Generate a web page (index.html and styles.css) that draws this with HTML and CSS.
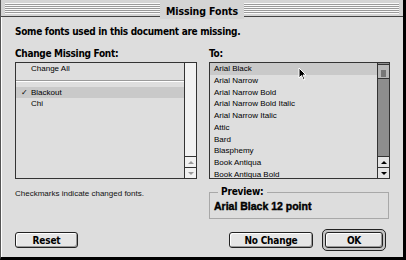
FILE: index.html
```html
<!DOCTYPE html>
<html lang="en">
<head>
  <meta charset="UTF-8">
  <title>Missing Fonts</title>
  <link rel="stylesheet" href="styles.css">
</head>
<body>

  <div class="window">
    <div class="titlebar">
      <span class="title">Missing Fonts</span>
    </div>

    <div class="content">
      <p class="message">Some fonts used in this document are missing.</p>

      <div class="columns">
        <div class="label">Change Missing Font:</div>
        <div class="label">To:</div>

        <div class="listbox">
          <ul class="list missing">
            <li>Change All</li>
            <li class="sep"></li>
            <li class="sel"><span class="check">&#x2713;</span>Blackout</li>
            <li>Chi</li>
          </ul>
          <div class="scrollbar off">
            <div class="track"></div>
            <div class="arrow up"><span></span></div>
            <div class="arrow down"><span></span></div>
          </div>
        </div>

        <div class="listbox">
          <ul class="list fonts">
            <li class="sel">Arial Black</li>
            <li>Arial Narrow</li>
            <li>Arial Narrow Bold</li>
            <li>Arial Narrow Bold Italic</li>
            <li>Arial Narrow Italic</li>
            <li>Attic</li>
            <li>Bard</li>
            <li>Blasphemy</li>
            <li>Book Antiqua</li>
            <li>Book Antiqua Bold</li>
          </ul>
          <div class="scrollbar">
            <div class="track"><div class="thumb"></div></div>
            <div class="arrow up"><span></span></div>
            <div class="arrow down"><span></span></div>
          </div>
        </div>

        <p class="note">Checkmarks indicate changed fonts.</p>

        <fieldset class="preview">
          <legend>Preview:</legend>
          <div class="sample">Arial Black 12 point</div>
        </fieldset>

        <div class="left-buttons">
          <button class="btn">Reset</button>
        </div>

        <div class="right-buttons">
          <button class="btn nochange">No Change</button>
          <div class="default-ring"><button class="btn ok">OK</button></div>
        </div>
      </div>
    </div>

    <!-- mouse pointer -->
    <svg class="cursor" width="9" height="14" viewBox="0 0 9 14">
      <path d="M1 1 L1 11 L3.5 8.5 L5.5 13 L7 12.3 L5 8 L8 8 Z" fill="#000" stroke="#fff" stroke-width="1"/>
    </svg>
  </div>

</body>
</html>
```

FILE: styles.css
```css
body {
  margin: 0;
  background: #dcdcdc;
  font-family: "DejaVu Sans Condensed", "Liberation Sans", sans-serif;
}
.window {
  position: relative;
  width: 406px;
  height: 260px;
  box-sizing: border-box;
  background: #dddddd;
  border-left: 1px solid #555;
  border-right: 3px solid #000;
  border-bottom: 3px solid #000;
  box-shadow: inset 1px 0 0 #fff;
}
.titlebar {
  height: 17px;
  box-sizing: border-box;
  border-bottom: 1px solid #444;
  background:
    repeating-linear-gradient(to bottom, #fafafa 0, #fafafa 1px, #9a9a9a 1px, #9a9a9a 2px) 4px 3px / calc(100% - 8px) 11px no-repeat,
    #d4d4d4;
  text-align: center;
}
.title {
  display: inline-block;
  padding: 0 6px;
  background: #d4d4d4;
  font-weight: bold;
  font-size: 10.5px;
  letter-spacing: -0.1px;
  line-height: 16px;
  color: #000;
}
.content {
  padding: 0 0 0 14px;
}
.message {
  margin: 8px 0 0;
  font-weight: bold;
  font-size: 10px;
  letter-spacing: -0.3px;
  line-height: 14px;
}
.columns {
  display: grid;
  grid-template-columns: 182px 181px;
  grid-template-rows: 16px 117px 49px 24px;
  column-gap: 12px;
  margin-top: 7px;
}
.label {
  font-weight: bold;
  font-size: 10px;
  letter-spacing: -0.3px;
  line-height: 16px;
}
.listbox {
  display: flex;
  border: 1px solid #333;
  background: #dedede;
}
.list {
  flex: 1;
  margin: 0;
  padding: 0;
  list-style: none;
  font-family: "Liberation Sans", sans-serif;
  font-size: 8px;
  overflow: hidden;
}
.list li {
  height: 11.75px;
  line-height: 11.75px;
  padding-left: 4px;
  white-space: nowrap;
}
.list.missing li {
  height: 11px;
  line-height: 11px;
  padding-left: 15px;
  position: relative;
}
.list.missing li.sep {
  height: 13px;
  padding: 0;
  background: linear-gradient(#9a9a9a, #9a9a9a) 0 6px / 100% 1px no-repeat,
              linear-gradient(#fff, #fff) 0 7px / 100% 1px no-repeat;
}
.list li.sel {
  background: #c9c9c9;
}
.check {
  position: absolute;
  left: 5px;
  font-size: 8px;
}
.scrollbar {
  width: 11px;
  border-left: 1px solid #333;
  display: flex;
  flex-direction: column;
  background: #8e8e8e;
}
.scrollbar.off {
  background: #f2f2f2;
}
.track {
  flex: 1;
}
.thumb {
  height: 15px;
  margin-top: 1px;
  box-sizing: border-box;
  border-top: 1px solid #333;
  border-bottom: 1px solid #333;
  background: linear-gradient(#777, #777) center 5px / 5px 7px no-repeat, #b8b8b8;
}
.arrow {
  height: 10px;
  border-top: 1px solid #333;
  background: #e4e4e4;
  display: flex;
  align-items: center;
  justify-content: center;
}
.scrollbar.off .arrow {
  background: #f2f2f2;
}
.arrow span {
  width: 0;
  height: 0;
  border-left: 3px solid transparent;
  border-right: 3px solid transparent;
}
.arrow.up span {
  border-bottom: 3px solid #000;
}
.arrow.down span {
  border-top: 3px solid #000;
}
.scrollbar.off .arrow.up span {
  border-bottom-color: #999;
}
.scrollbar.off .arrow.down span {
  border-top-color: #999;
}
.note {
  margin: 10px 0 0;
  font-family: "Liberation Sans", sans-serif;
  font-size: 8px;
  color: #111;
}
.preview {
  margin: 9px 0 0;
  padding: 2px 4px;
  height: 31px;
  box-sizing: border-box;
  border: 1px solid #a8a8a8;
  width: 180px;
}
.preview legend {
  padding: 0 3px;
  margin-left: 4px;
  font-weight: bold;
  font-size: 10px;
  letter-spacing: -0.2px;
  line-height: 8px;
}
.sample {
  font-family: "Liberation Sans", sans-serif;
  font-weight: bold;
  font-size: 10.5px;
  -webkit-text-stroke: 0.4px #000;
  margin-top: 2px;
}
.left-buttons {
  display: flex;
  align-items: center;
}
.right-buttons {
  display: flex;
  align-items: center;
  justify-content: flex-end;
  gap: 9px;
  padding-right: 4px;
}
.btn {
  height: 16px;
  padding: 0;
  border: 1px solid #222;
  border-radius: 3px;
  background: #e6e6e6;
  box-shadow: inset 1px 1px 0 #fff, inset -1px -1px 0 #999;
  font-family: "DejaVu Sans Condensed", "Liberation Sans", sans-serif;
  font-weight: bold;
  font-size: 10px;
  letter-spacing: -0.2px;
  color: #000;
}
.left-buttons .btn {
  width: 63px;
}
.nochange {
  width: 84px;
}
.default-ring {
  padding: 2px;
  border: 1px solid #222;
  border-radius: 5px;
  background: #c4c4c4;
}
.ok {
  width: 58px;
  display: block;
}
.cursor {
  position: absolute;
  left: 297px;
  top: 67px;
}
```
